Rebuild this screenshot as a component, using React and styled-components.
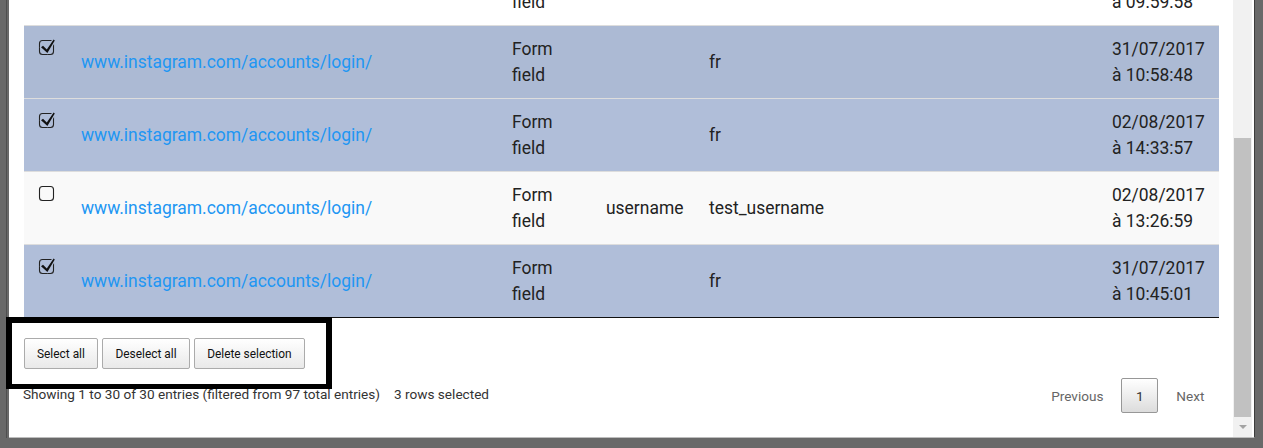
import React, { useLayoutEffect, useRef } from 'react';
import styled, { createGlobalStyle } from 'styled-components';

const GlobalStyle = createGlobalStyle`
  html, body {
    margin: 0;
    padding: 0;
    background: #696969;
    height: 448px;
    overflow: hidden;
  }
  body {
    font-family: Roboto, "Liberation Sans", sans-serif;
  }
`;

const Screen = styled.div`
  position: relative;
  height: 448px;
  padding-left: 9px;
  box-sizing: border-box;
`;

const Window = styled.div`
  width: 1245px;
  height: 437px;
  background: #fff;
  display: flex;
  border-right: 1px solid #3d3d3d;
  border-bottom: 1px solid #bdbdbd;
  box-shadow: -2px 0 0 #696969, -3px 0 0 #4f4f4f;
`;

const Viewport = styled.div`
  flex: 1;
  min-width: 0;
  height: 100%;
  overflow: hidden;
`;

const Page = styled.div`
  padding: 0 14px 40px 15px;
`;

const Table = styled.table`
  width: 1195px;
  table-layout: fixed;
  border-collapse: separate;
  border-spacing: 0;
  border-bottom: 1px solid #111;
  font-size: 17.45px;
  line-height: 26px;
  color: #222;
`;

const Row = styled.tr`
  background-color: ${(p) => p.$bg};
`;

const Cell = styled.td`
  border-top: 1px solid #ddd;
  padding: 10px 12px;
  vertical-align: middle;
  height: 52px;
  white-space: nowrap;
`;

const CheckCell = styled.td`
  border-top: 1px solid #ddd;
  padding: 13px 0 0 14px;
  vertical-align: top;
`;

const Link = styled.a`
  color: #2196f3;
  text-decoration: none;
`;

const ButtonBar = styled.div`
  display: flex;
  gap: 4.6px;
  margin-top: 20px;
`;

const ActionButton = styled.button`
  height: 31px;
  padding: 0 12px;
  border: 1px solid #ababab;
  border-radius: 2px;
  background: linear-gradient(to bottom, #ffffff 0%, #e9e9e9 100%);
  font-family: Roboto, "Liberation Sans", sans-serif;
  font-size: 11.9px;
  color: #111;
  cursor: pointer;
`;

const FooterRow = styled.div`
  display: flex;
  justify-content: space-between;
  align-items: center;
  margin-top: 9px;
  height: 35px;
`;

const Info = styled.div`
  font-size: 13.6px;
  color: #333;
  padding-bottom: 3px;
  margin-left: -1px;
  white-space: nowrap;
`;

const SelectInfo = styled.span`
  margin-left: 14px;
`;

const Paginate = styled.div`
  display: flex;
  gap: 3.4px;
  height: 35px;
`;

const PageButton = styled.span`
  display: flex;
  align-items: center;
  box-sizing: border-box;
  padding: 0 13.6px;
  border: 1px solid ${(p) => (p.$current ? '#979797' : 'transparent')};
  border-radius: 2px;
  background: ${(p) =>
    p.$current ? 'linear-gradient(to bottom, #ffffff 0%, #dcdcdc 100%)' : 'transparent'};
  color: ${(p) => (p.$current ? '#333' : '#666')};
  font-size: 13.6px;
`;

const Scrollbar = styled.div`
  width: 19px;
  margin-right: 2px;
  background: #f1f1f1;
  display: flex;
  flex-direction: column;
`;

const Thumb = styled.div`
  margin: 138px 1px 0 1px;
  height: 279px;
  background: #c1c1c1;
`;

const ArrowButton = styled.div`
  flex: 1;
  display: flex;
  justify-content: center;
  padding: 8px 0 0 1px;
`;

const Annotation = styled.div`
  position: absolute;
  left: 6px;
  top: 317px;
  width: 326px;
  height: 72px;
  box-sizing: border-box;
  border: 6px solid #000;
  border-bottom-width: 5px;
  pointer-events: none;
`;

const CheckIcon = ({ checked, bg }) => (
  <svg width="18" height="18" viewBox="0 0 18 18" style={{ display: 'block', overflow: 'visible' }}>
    <rect x="1.5" y="1.5" width="14" height="14" rx="3" fill="none" stroke="#222" strokeWidth="1.1" />
    {checked && (
      <>
        <path
          d="M3 8.3 L5 6.8 L8.8 10.6 L15.6 0.6 L16.8 1.4 L9.4 14 Z"
          fill={bg}
          stroke={bg}
          strokeWidth="2.4"
          strokeLinejoin="round"
        />
        <path d="M3 8.3 L5 6.8 L8.8 10.6 L15.6 0.6 L16.8 1.4 L9.4 14 Z" fill="#111" />
      </>
    )}
  </svg>
);

const rows = [
  { checked: false, bg: '#ffffff', param: '', value: 'fr', date: ['31/07/2017', 'à 09:59:58'] },
  { checked: true, bg: '#acbad4', param: '', value: 'fr', date: ['31/07/2017', 'à 10:58:48'] },
  { checked: true, bg: '#b0bed9', param: '', value: 'fr', date: ['02/08/2017', 'à 14:33:57'] },
  { checked: false, bg: '#f9f9f9', param: 'username', value: 'test_username', date: ['02/08/2017', 'à 13:26:59'] },
  { checked: true, bg: '#b0bed9', param: '', value: 'fr', date: ['31/07/2017', 'à 10:45:01'] },
];

export default function App() {
  const viewRef = useRef(null);
  useLayoutEffect(() => {
    if (viewRef.current) viewRef.current.scrollTop = 48;
  }, []);

  return (
    <>
      <GlobalStyle />
      <Screen>
        <Window>
          <Viewport ref={viewRef}>
            <Page>
              <Table>
                <colgroup>
                  <col style={{ width: 45 }} />
                  <col style={{ width: 431 }} />
                  <col style={{ width: 94 }} />
                  <col style={{ width: 103 }} />
                  <col style={{ width: 403 }} />
                  <col style={{ width: 119 }} />
                </colgroup>
                <tbody>
                  {rows.map((r, i) => (
                    <Row key={i} $bg={r.bg}>
                      <CheckCell>
                        <CheckIcon checked={r.checked} bg={r.bg} />
                      </CheckCell>
                      <Cell>
                        <Link href="#">www.instagram.com/accounts/login/</Link>
                      </Cell>
                      <Cell>
                        Form
                        <br />
                        field
                      </Cell>
                      <Cell>{r.param}</Cell>
                      <Cell>{r.value}</Cell>
                      <Cell>
                        {r.date[0]}
                        <br />
                        {r.date[1]}
                      </Cell>
                    </Row>
                  ))}
                </tbody>
              </Table>
              <ButtonBar>
                <ActionButton>Select all</ActionButton>
                <ActionButton>Deselect all</ActionButton>
                <ActionButton>Delete selection</ActionButton>
              </ButtonBar>
              <FooterRow>
                <Info>
                  Showing 1 to 30 of 30 entries (filtered from 97 total entries)
                  <SelectInfo>3 rows selected</SelectInfo>
                </Info>
                <Paginate>
                  <PageButton>Previous</PageButton>
                  <PageButton $current>1</PageButton>
                  <PageButton>Next</PageButton>
                </Paginate>
              </FooterRow>
            </Page>
          </Viewport>
          <Scrollbar>
            <Thumb />
            <ArrowButton>
              <svg width="8" height="4" viewBox="0 0 8 4">
                <path d="M0 0 L8 0 L4 4 Z" fill="#a3a3a3" />
              </svg>
            </ArrowButton>
          </Scrollbar>
        </Window>
        <Annotation />
      </Screen>
    </>
  );
}
